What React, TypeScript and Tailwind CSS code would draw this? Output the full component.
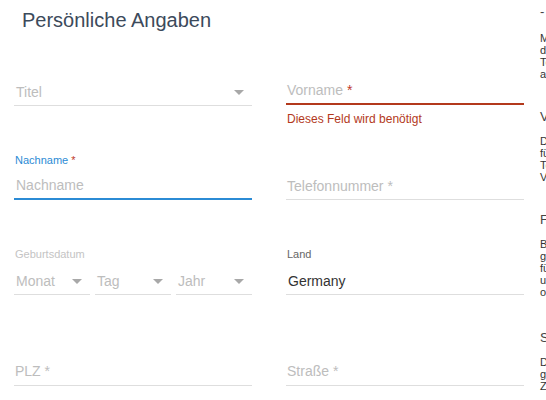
const sidebar = [
  { title: "- Hinweise", lines: ["Mit dem Absenden des Formulars", "der Daten werden Ihre Angaben", "Teil unserer Datenbank und", "ausschließlich intern genutzt."] },
  { title: "Vertraulichkeit", lines: ["Die Daten werden vertraulich", "für die Bearbeitung genutzt.", "Teilweise erfolgt eine", "Verschlüsselung der Angaben."] },
  { title: "Fragen", lines: ["Bei Fragen zu Ihren Angaben", "geben wir Ihnen gerne Auskunft", "für alle Felder des Formulars", "und stehen Ihnen jederzeit", "oder telefonisch zur Verfügung."] },
  { title: "Sicherheit", lines: ["Die Übertragung erfolgt", "gesichert und geschützt", "Zugriff nur für Berechtigte."] }
];

function Caret() {
  return <span className="h-0 w-0 border-x-[5px] border-t-[5px] border-x-transparent border-t-[#a8a8a8]" />;
}

function SelectBox({ label }: { label: string }) {
  return (
    <div className="flex h-[26px] items-center justify-between border-b border-[#dedede] pl-[2px] pr-[8px] text-[14px] text-[#bdbdbd]">
      <span>{label}</span>
      <Caret />
    </div>
  );
}

export default function App() {
  return (
    <div className="flex h-[400px] w-[546px] overflow-hidden bg-white" style={{ fontFamily: '"Liberation Sans", Arial, sans-serif' }}>
      <main className="w-[540px] shrink-0">
        <h1 className="pl-[22px] pt-[6px] text-[20px] leading-[28px] text-[#3c4a5b]">Persönliche Angaben</h1>

        <div className="mt-[36px] grid grid-cols-[238px_238px] gap-x-[34px] pl-[14px]">
          {/* row 1 */}
          <div className="h-[70px] pt-[10px]">
            <SelectBox label="Titel" />
          </div>
          <div className="h-[70px] pt-[8px]">
            <div className="flex h-[27px] items-center border-b-2 border-[#b3391c] pl-[1px] text-[14px] text-[#bdbdbd]">
              Vorname<span className="ml-[4px] text-[#c0392b]">*</span>
            </div>
            <p className="mt-[7px] pl-[1px] text-[12px] leading-[14px] text-[#b3391c]">Dieses Feld wird benötigt</p>
          </div>

          {/* row 2 */}
          <div className="h-[100px] pt-[14px]">
            <p className="pl-[1px] text-[11px] leading-[13px] text-[#2b8bd5]">
              Nachname <span className="text-[#c0392b]">*</span>
            </p>
            <div className="mt-[6px] flex h-[27px] items-center border-b-2 border-[#2b8bd5] pl-[2px] text-[14px] text-[#bdbdbd]">Nachname</div>
          </div>
          <div className="h-[100px] pt-[34px]">
            <div className="flex h-[26px] items-center border-b border-[#dedede] pl-[1px] text-[14px] text-[#bdbdbd]">Telefonnummer *</div>
          </div>

          {/* row 3 */}
          <div className="h-[100px] pt-[8px]">
            <p className="pl-[1px] text-[11px] leading-[13px] text-[#c4c4c4]">Geburtsdatum</p>
            <div className="mt-[8px] grid grid-cols-3 gap-[5px]">
              <SelectBox label="Monat" />
              <SelectBox label="Tag" />
              <SelectBox label="Jahr" />
            </div>
          </div>
          <div className="h-[100px] pt-[8px]">
            <p className="pl-[1px] text-[11px] leading-[13px] text-[#666]">Land</p>
            <div className="mt-[8px] flex h-[26px] items-center border-b border-[#dedede] pl-[2px] text-[14px] text-[#333]">Germany</div>
          </div>

          {/* row 4 */}
          <div className="pt-[18px]">
            <div className="flex h-[28px] items-center border-b border-[#dedede] pl-[1px] text-[14px] text-[#bdbdbd]">PLZ *</div>
          </div>
          <div className="pt-[18px]">
            <div className="flex h-[28px] items-center border-b border-[#dedede] pl-[1px] text-[14px] text-[#bdbdbd]">Straße *</div>
          </div>
        </div>
      </main>

      <aside className="w-[200px] shrink-0 pt-[4px] text-[#333]">
        {sidebar.map((s, i) => (
          <section key={s.title} className={i === 0 ? "" : i === 3 ? "mt-[32px]" : "mt-[29px]"}>
            <h3 className="text-[13px] leading-[16px] text-[#444]">{s.title}</h3>
            <div className={i === 0 ? "mt-[12px]" : "mt-[10px]"}>
              {s.lines.map((l) => (
                <p key={l} className="whitespace-nowrap text-[11px] leading-[12px]">{l}</p>
              ))}
            </div>
          </section>
        ))}
      </aside>
    </div>
  );
}
